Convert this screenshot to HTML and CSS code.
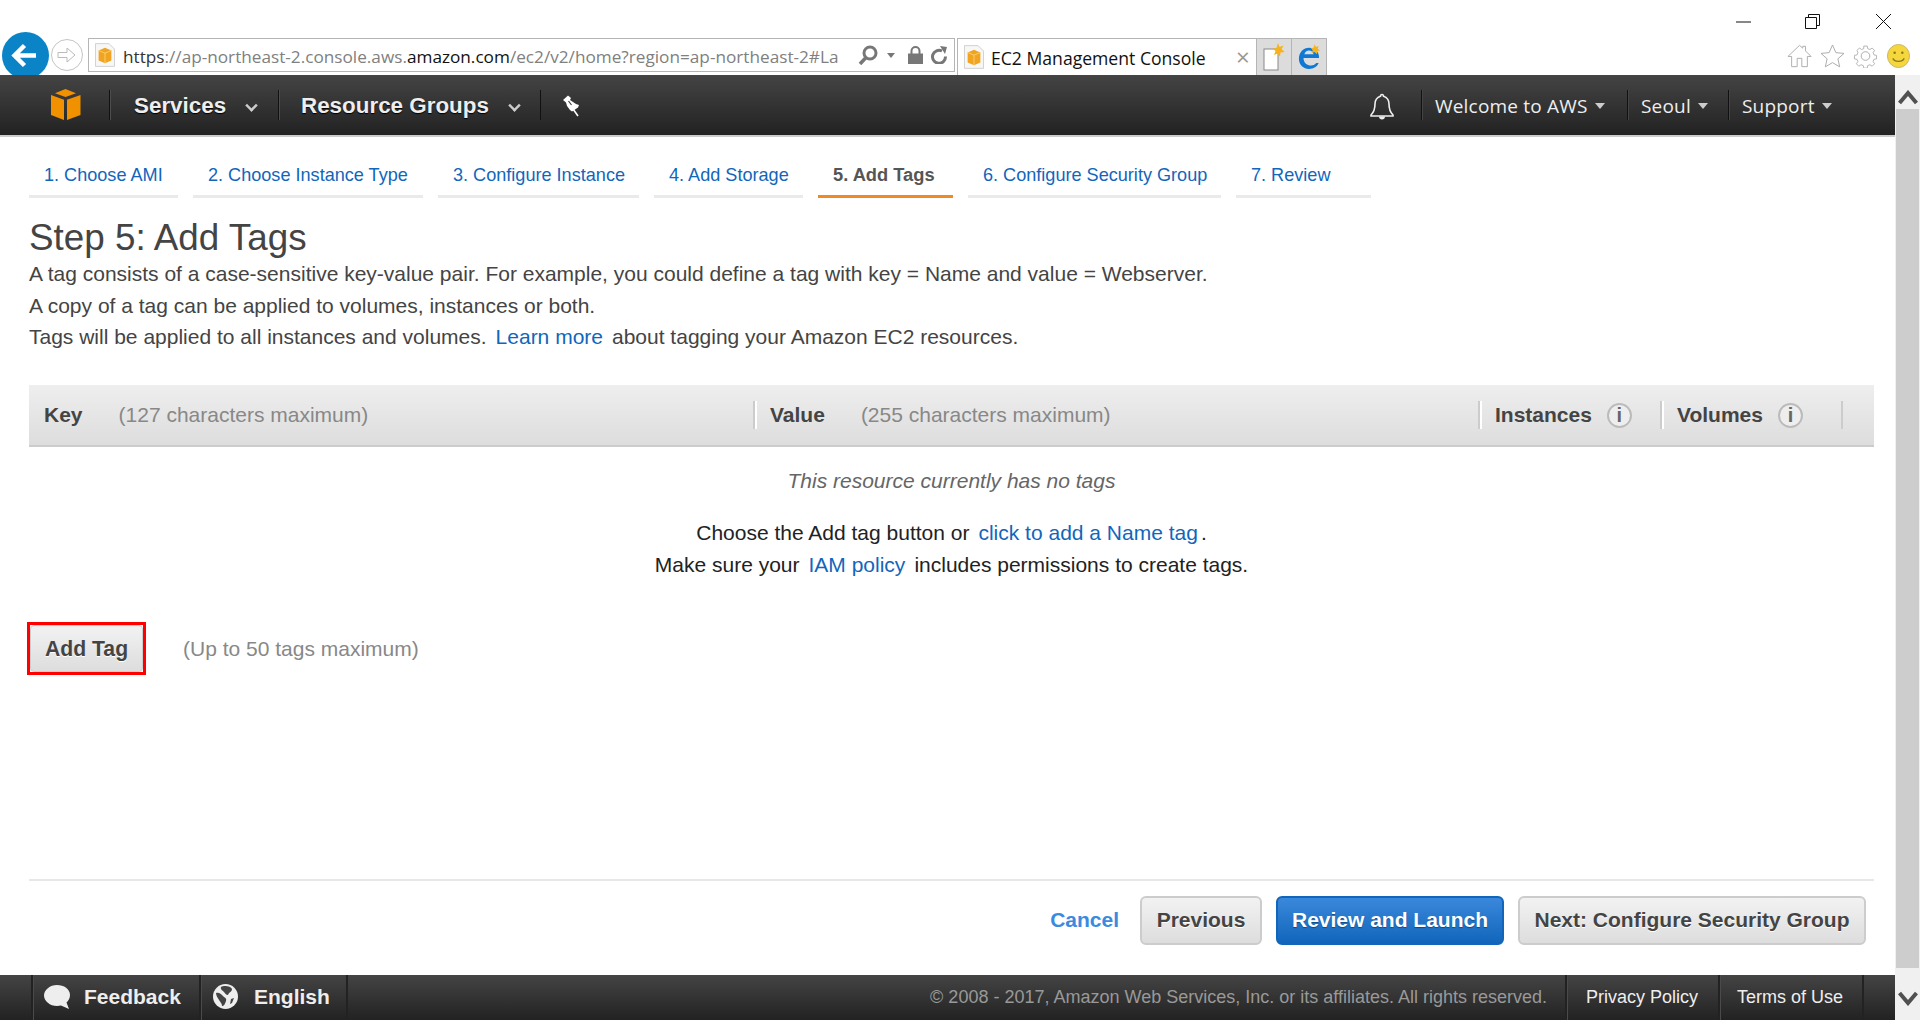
FILE: index.html
```html
<!DOCTYPE html>
<html lang="en">
<head>
<meta charset="utf-8">
<title>EC2 Management Console</title>
<link rel="stylesheet" href="styles.css">
</head>
<body>
<header class="chrome">
  <svg class="back" viewBox="0 0 47 47"><circle cx="23.5" cy="23.5" r="23.5" fill="#0a84c6"/><path d="M34 23.5H13M22.5 13.5 12.5 23.5l10 10" fill="none" stroke="#fff" stroke-width="4.5"/></svg>
  <svg class="forward" viewBox="0 0 32 32"><circle cx="16" cy="16" r="15.5" fill="#fff" stroke="#c4c4c4"/><path d="M7 13.500h9V9l8 7-8 7v-4.500H7z" fill="#fff" stroke="#bbb"/></svg>
  <div class="address">
    <svg class="fav" viewBox="0 0 22 26"><path d="M.5.500h15l6 6v19H.5z" fill="#f7f7f7" stroke="#ccc"/><path d="M4 8l7-3 7 3v11l-7 3-7-3z" fill="#f0a420"/><path d="M4 8l7 3 7-3M11 11v11" fill="none" stroke="#fbd27a"/></svg>
    <span class="url"><span class="url-dark">https</span>://ap-northeast-2.console.aws.<span class="url-host">amazon.com</span>/ec2/v2/home?region=ap-northeast-2#La</span>
    <svg class="addr-search" viewBox="0 0 20 20"><circle cx="12" cy="8" r="6" fill="none" stroke="#777" stroke-width="3"/><path d="M8 12.500 2 19" stroke="#777" stroke-width="3.500"/></svg>
    <span class="addr-caret"></span>
    <svg class="addr-lock" viewBox="0 0 15 18"><path d="M3.500 8V5a4 4 0 0 1 8 0v3" fill="none" stroke="#777" stroke-width="2"/><rect y="7.500" width="15" height="10.500" fill="#777"/></svg>
    <svg class="addr-refresh" viewBox="0 0 18 18"><path d="M12 5a6.500 6.500 0 1 0 3.500 5.500" fill="none" stroke="#777" stroke-width="3"/><path d="M10 0l7 1-2 7z" fill="#777"/></svg>
  </div>
  <div class="tab">
    <svg class="fav" viewBox="0 0 22 26"><path d="M.5.500h15l6 6v19H.5z" fill="#f7f7f7" stroke="#ccc"/><path d="M4 8l7-3 7 3v11l-7 3-7-3z" fill="#f0a420"/><path d="M4 8l7 3 7-3M11 11v11" fill="none" stroke="#fbd27a"/></svg>
    <span class="tab-title">EC2 Management Console</span>
    <span class="tab-close">×</span>
  </div>
  <div class="tab-btn">
    <svg viewBox="0 0 22 28"><rect x="1" y="6" width="14" height="21" fill="#fff" stroke="#888"/><path d="M15 0l1.500 4 4-1.500-2 3.500 3 3-4 .5-.5 4-2.500-3-3.500 1.500 1.500-4-3-2.500 4-.5z" fill="#f5b21e"/></svg>
  </div>
  <div class="tab-btn">
    <svg viewBox="0 0 24 28"><path d="M20 20.500a8 8 0 0 1-14-5.500h17C23 8 18 4 12 4 6 4 1 9 1 16s5 11 11 11c5 0 9-2.500 10.500-6.500zM7 11c.5-2.500 2.500-4 5-4s4.500 1.500 5 4z" fill="#0f78d4"/><path d="M18 0l1.500 3 3-1-1 3 2.500 2-3 .5-.5 3.500-2.500-2.500-3 1 1-3-2-2 3-.5z" fill="#f5b21e"/></svg>
  </div>
  <div class="chrome-right">
    <div class="winbtns">
      <svg class="win-min" viewBox="0 0 15 15"><path d="M0 8h15" stroke="#111"/></svg>
      <svg class="win-restore" viewBox="0 0 15 15"><path d="M3.500 3V.5h11v11H12M.5 3.500h11v11H.5z" fill="none" stroke="#111"/></svg>
      <svg class="win-close" viewBox="0 0 15 15"><path d="M0 0l15 15M15 0 0 15" stroke="#111"/></svg>
    </div>
    <div class="toolicons">
      <svg viewBox="0 0 27 25"><path d="M13.500 1 1 13h4v11h6v-9h5v9h6V13h4l-6-6V2h-3v2z" fill="#fff" stroke="#aaa"/></svg>
      <svg viewBox="0 0 25 25"><path d="M12.500 1l3.500 8 8.500.8-6.400 5.600 1.900 8.400-7.500-4.400L5 23.800l1.900-8.400L.5 9.800 9 9z" fill="#fff" stroke="#aaa"/></svg>
      <svg viewBox="0 0 25 25"><circle cx="12.500" cy="12.500" r="4.500" fill="none" stroke="#aaa"/><path d="M10.500 1h4l.6 3 2.500 1 2.600-1.700 2.800 2.800-1.700 2.600 1 2.500 3 .6v4l-3 .6-1 2.500 1.700 2.600-2.800 2.800-2.600-1.700-2.500 1-.6 3h-4l-.6-3-2.500-1-2.600 1.700-2.800-2.800 1.700-2.600-1-2.500-3-.6v-4l3-.6 1-2.500L2.700 6l2.800-2.800L8 5l2.500-1z" fill="none" stroke="#aaa" transform="translate(1.250 1.250) scale(.9)"/></svg>
      <svg viewBox="0 0 24 25"><ellipse cx="12" cy="12.500" rx="11.500" ry="12" fill="#f5d63d" stroke="#c9b66a"/><circle cx="8" cy="9" r="1.300" fill="#8a7a20"/><circle cx="16" cy="9" r="1.300" fill="#8a7a20"/><path d="M6 15c2 4 10 4 12 0" fill="none" stroke="#8a7a20" stroke-width="1.300"/></svg>
    </div>
  </div>
</header>
<div class="app">
  <div class="page">
    <nav class="nav">
      <div class="nav-logo">
        <svg viewBox="0 0 31 31"><path d="M15.500 0 26 4.200 15.500 8 5 4.200z" fill="#f29100"/><path d="M1 6l13 4.800V31L1 26z" fill="#f29100"/><path d="M30.500 6 17 10.800V31l13.500-5z" fill="#f29100"/></svg>
      </div>
      <div class="nav-item nav-services">Services<span class="nav-caret"></span></div>
      <div class="nav-item nav-groups">Resource Groups<span class="nav-caret"></span></div>
      <div class="nav-pin">
        <svg viewBox="0 0 18 22"><path d="M1 5 6 .5 9 3 8 5l6 4 3 1-1 2.500-6 4-2-1.500-3-4-1-3.500z" fill="#fff"/><path d="M11 14l5 7" stroke="#fff" stroke-width="1.600"/><path d="M6.500 6l3 4" stroke="#444" stroke-width="1.200"/></svg>
      </div>
      <div class="nav-right">
        <div class="nav-bell">
          <svg viewBox="0 0 24 27"><path d="M12 1.500c-1 0-1.500.7-1.500 1.800C7 4.500 5 7.500 5 11c0 5-1 8-4 11v1h22v-1c-3-3-4-6-4-11 0-3.500-2-6.500-5.500-7.700 0-1.100-.5-1.800-1.500-1.800z" fill="none" stroke="#eee" stroke-width="1.600"/><path d="M9 23.500h6c0 2-1.300 3-3 3s-3-1-3-3z" fill="#eee"/></svg>
        </div>
        <div class="nav-sm nav-welcome">Welcome to AWS<span class="sm-caret"></span></div>
        <div class="nav-sm nav-seoul">Seoul<span class="sm-caret"></span></div>
        <div class="nav-sm nav-support">Support<span class="sm-caret"></span></div>
      </div>
    </nav>
    <main class="main">
      <ul class="steps">
        <li class="step">1. Choose AMI</li>
        <li class="step">2. Choose Instance Type</li>
        <li class="step">3. Configure Instance</li>
        <li class="step">4. Add Storage</li>
        <li class="step step-active">5. Add Tags</li>
        <li class="step">6. Configure Security Group</li>
        <li class="step">7. Review</li>
      </ul>
      <h1 class="title">Step 5: Add Tags</h1>
      <div class="intro">
        <p>A tag consists of a case-sensitive key-value pair. For example, you could define a tag with key = Name and value = Webserver.</p>
        <p>A copy of a tag can be applied to volumes, instances or both.</p>
        <p>Tags will be applied to all instances and volumes.<a class="link link-gap">Learn more</a>about tagging your Amazon EC2 resources.</p>
      </div>
      <div class="thead">
        <div class="th th-first"><b>Key</b><span class="hint">(127 characters maximum)</span></div>
        <div class="th"><b>Value</b><span class="hint">(255 characters maximum)</span></div>
        <div class="th"><b>Instances</b><span class="info">i</span></div>
        <div class="th"><b>Volumes</b><span class="info">i</span></div>
        <div class="th th-last"></div>
      </div>
      <p class="empty">This resource currently has no tags</p>
      <div class="help">
        <p>Choose the Add tag button or<a class="link link-gap">click to add a Name tag</a><span class="dot">.</span></p>
        <p>Make sure your<a class="link link-gap">IAM policy</a>includes permissions to create tags.</p>
      </div>
      <div class="addrow">
        <div class="highlight"><button class="btn btn-add">Add Tag</button></div>
        <span class="addnote">(Up to 50 tags maximum)</span>
      </div>
      <div class="actions">
        <a class="cancel">Cancel</a>
        <button class="btn btn-prev">Previous</button>
        <button class="btn btn-primary">Review and Launch</button>
        <button class="btn btn-next">Next: Configure Security Group</button>
      </div>
    </main>
    <footer class="foot">
      <div class="foot-item foot-feedback">
        <svg viewBox="0 0 26 24"><path d="M13 0c7 0 13 4 13 10 0 3-1.500 6-3.500 7.500L25 24l-8-3.500c-1.200.3-2.500.5-4 .5C6 21 0 16 0 10.500S6 0 13 0z" fill="#eee"/></svg>
        <span>Feedback</span>
      </div>
      <div class="foot-item foot-lang">
        <svg viewBox="0 0 25 25"><circle cx="12.500" cy="12.500" r="12.500" fill="#eee"/><path d="M8 3c3-2 10-1 11 2 0 3-3 3-4 6-2 0-3-2-4-3S7 5 8 3zM3 9c3-1 5 1 7 3s4 2 3 5-2 5-4 5c0-3-2-4-3-6S3 12 3 9zM18 15l3-1-2 5-2 1z" fill="#444"/></svg>
        <span>English</span>
      </div>
      <div class="foot-right">
        <span class="copyright">© 2008 - 2017, Amazon Web Services, Inc. or its affiliates. All rights reserved.</span>
        <a class="foot-link foot-privacy">Privacy Policy</a>
        <a class="foot-link foot-terms">Terms of Use</a>
      </div>
    </footer>
  </div>
  <aside class="scrollbar">
    <svg class="sb-arrow sb-up" viewBox="0 0 20 15"><path d="M1.500 13 10 3l8.500 10" fill="none" stroke="#505050" stroke-width="4"/></svg>
    <div class="sb-thumb"></div>
    <svg class="sb-arrow sb-down" viewBox="0 0 20 15"><path d="M1.500 2 10 12l8.500-10" fill="none" stroke="#505050" stroke-width="4"/></svg>
  </aside>
</div>
</body>
</html>
```
FILE: styles.css
```css
* { box-sizing: border-box; }
html, body { margin: 0; height: 1020px; overflow: hidden; background: #fff; }
body { font-family: "Liberation Sans", Arial, sans-serif; display: flex; flex-direction: column; color: #444; }
p { margin: 0; }

/* browser chrome */
.chrome { height: 75px; flex: none; display: flex; align-items: flex-start; padding-top: 32px; padding-left: 2px; overflow: hidden; position: relative; font-family: "Open Sans", sans-serif; }
.back { width: 47px; height: 47px; flex: none; }
.forward { width: 32px; height: 32px; margin: 7px 0 0 2px; flex: none; }
.address { width: 867px; height: 34px; margin: 6px 0 0 5px; border: 1px solid #b5b5b5; display: flex; align-items: center; padding-left: 6px; flex: none; }
.fav { width: 20px; height: 24px; flex: none; }
.url { width: 728px; margin-left: 8px; padding-top: 2px; overflow: hidden; white-space: nowrap; font-size: 17.200px; color: #808080; flex: none; }
.url-dark { color: #333; }
.url-host { color: #111; }
.addr-search { width: 20px; height: 20px; margin-left: 7px; flex: none; }
.addr-caret { width: 0; height: 0; border: 4px solid transparent; border-top: 5px solid #777; border-bottom: 0; margin-left: 9px; flex: none; }
.addr-lock { width: 15px; height: 18px; margin-left: 13px; flex: none; }
.addr-refresh { width: 18px; height: 18px; margin-left: 7px; flex: none; }
.tab { width: 300px; height: 37px; margin: 6px 0 0 2px; border: 1px solid #b5b5b5; border-bottom: 0; display: flex; align-items: center; padding-left: 6px; flex: none; }
.tab-title { margin-left: 7px; padding-top: 2px; font-size: 17.600px; color: #111; white-space: nowrap; width: 234px; flex: none; }
.tab-close { color: #999; font-size: 24px; line-height: 1; margin-left: 11px; }
.tab-btn { width: 35px; height: 37px; margin-top: 6px; background: #dcdcdc; border: 1px solid #b5b5b5; border-left: 0; border-bottom: 0; display: flex; align-items: center; justify-content: center; flex: none; }
.tab-btn svg { width: 22px; height: 28px; }
.chrome-right { position: absolute; top: 0; right: 0; width: 200px; }
.winbtns { display: flex; height: 44px; padding-top: 14px; }
.win-min, .win-restore, .win-close { width: 15px; height: 15px; }
.win-min { margin-left: 16px; }
.win-restore { margin-left: 54px; }
.win-close { margin-left: 56px; }
.toolicons { display: flex; align-items: center; padding-left: 67px; gap: 8px; }
.toolicons svg { width: 25px; height: 24px; flex: none; }

/* app */
.app { flex: 1; min-height: 0; display: grid; grid-template-columns: 1fr 25px; }
.page { display: flex; flex-direction: column; min-width: 0; }

.nav { height: 62px; flex: none; display: flex; background: linear-gradient(#444, #222) 0 0 / 100% 60px no-repeat; border-bottom: 2px solid #ccc; }
.nav-logo { width: 109px; padding: 14px 0 0 50px; flex: none; }
.nav-logo svg { width: 31px; height: 31px; display: block; }
.nav-item { margin: 15px 0; height: 30px; padding-top: 2px; border-left: 1px solid #111; box-shadow: inset 1px 0 #4d4d4d; display: flex; align-items: center; color: #eee; font-weight: bold; font-size: 22.400px; text-shadow: 0 1px 1px #000; flex: none; }
.nav-services { width: 169px; padding-left: 24px; }
.nav-groups { width: 262px; padding-left: 22px; }
.nav-caret { width: 11px; height: 11px; border-right: 3px solid #ccc; border-bottom: 3px solid #ccc; transform: rotate(45deg) scale(.8); margin: -2px 0 0 20px; }
.nav-pin { margin: 15px 0; height: 30px; border-left: 1px solid #111; padding: 5px 0 0 21px; flex: none; }
.nav-pin svg { width: 18px; height: 22px; display: block; }
.nav-right { margin-left: auto; display: flex; }
.nav-bell { width: 100px; padding: 18px 0 0 49px; flex: none; }
.nav-bell svg { width: 24px; height: 27px; display: block; }
.nav-sm { margin: 15px 0; height: 30px; padding-top: 2px; border-left: 1px solid #111; box-shadow: inset 1px 0 #444; display: flex; align-items: center; padding-left: 13px; color: #eee; font-family: "Open Sans", sans-serif; font-size: 19px; letter-spacing: .2px; flex: none; }
.nav-welcome { width: 206px; }
.nav-seoul { width: 101px; }
.nav-support { width: 167px; }
.sm-caret { width: 0; height: 0; border: 5.500px solid transparent; border-top: 6px solid #ccc; border-bottom: 0; margin-left: 7px; }

.main { flex: 1; min-height: 0; display: flex; flex-direction: column; padding: 0 21px 0 29px; }
.steps { list-style: none; margin: 0; padding: 0; display: grid; grid-template-columns: 149px 230px 201px 149px 135px 253px 135px; gap: 15px; height: 61px; flex: none; }
.step { height: 61px; padding: 27px 0 0 15px; font-size: 18.100px; line-height: 22px; color: #1166bb; border-bottom: 3px solid #eaeaea; white-space: nowrap; }
.step-active { color: #555; font-weight: bold; font-size: 18.300px; border-bottom-color: #f08a24; }
.title { margin: 20px 0 0; font-size: 36.800px; line-height: 40px; font-weight: normal; color: #444; }
.intro { font-size: 21px; line-height: 31.500px; color: #444; }
.link { color: #1166bb; }
.link-gap { margin: 0 9px; }
.thead { margin-top: 32.500px; height: 62px; flex: none; display: grid; grid-template-columns: 724px 725px 182px 181px 1fr; align-items: center; background: linear-gradient(#eee, #ddd); border-bottom: 2px solid #ccc; font-size: 21px; }
.th { height: 28px; border-left: 2px solid #ccc; box-shadow: inset 2px 0 #fff; padding-left: 15px; display: flex; align-items: center; }
.th-first { border-left: 0; box-shadow: none; padding-left: 15px; }
.th-last { box-shadow: none; }
.hint { margin-left: 36px; color: #888; }
.info { width: 25px; height: 25px; margin-left: 15px; border-radius: 50%; border: 2px solid #bbb; background: #eee; display: flex; align-items: center; justify-content: center; font: bold 20px "Liberation Sans", sans-serif; color: #666; }
.empty { margin-top: 18px; text-align: center; font-style: italic; font-size: 21px; line-height: 32px; color: #666; }
.help { margin-top: 20px; text-align: center; font-size: 21px; line-height: 32px; color: #222; }
.dot { margin-left: -6px; }
.addrow { margin-top: 41px; display: flex; align-items: center; }
.highlight { width: 119px; height: 53px; margin-left: -2px; border: 3px solid #f00; flex: none; }
.btn { font-family: "Liberation Sans", sans-serif; font-weight: bold; font-size: 21px; height: 49px; border-radius: 6px; border: 2px solid #ccc; background: linear-gradient(#f2f2f2, #ddd); color: #444; text-shadow: 0 1px 0 #fff; padding: 0 0 2px; white-space: nowrap; }
.btn-add { display: block; width: 113px; height: 47px; border-width: 1px; border-radius: 4px; padding: 0; font-size: 21.200px; }
.addnote { margin-left: 37px; font-size: 21px; color: #888; }
.actions { margin-top: auto; margin-bottom: 30px; border-top: 2px solid #e8e8e8; padding-top: 15px; display: flex; justify-content: flex-end; align-items: center; gap: 14px; padding-right: 8px; }
.cancel { color: #3b8ade; font-weight: bold; font-size: 21px; margin-right: 7px; margin-bottom: 2px; }
.btn-prev { width: 122px; }
.btn-primary { width: 228px; background: linear-gradient(#3a88dc, #1166bb); border-color: #1166bb; color: #fff; text-shadow: 0 1px 1px #0b4a8a; }
.btn-next { width: 348px; }

.foot { height: 45px; flex: none; display: flex; align-items: stretch; background: linear-gradient(#444, #222); color: #eee; font-weight: bold; font-size: 21px; padding-left: 31px; }
.foot-item { display: flex; align-items: center; border-left: 2px solid #222; box-shadow: inset 1px 0 #4a4a4a; padding-bottom: 2px; flex: none; }
.foot-feedback { width: 168px; padding-left: 11px; gap: 14px; }
.foot-feedback svg { width: 26px; height: 24px; }
.foot-lang { width: 147px; padding-left: 12px; gap: 16px; }
.foot-lang svg { width: 25px; height: 25px; }
.foot-right { flex: 1; display: flex; align-items: center; justify-content: flex-end; border-left: 2px solid #222; font-weight: normal; font-size: 18px; padding-right: 31px; }
.copyright { color: #999; margin-right: 18px; }
.foot-link { height: 100%; display: flex; align-items: center; border-left: 2px solid #222; box-shadow: inset 1px 0 #4a4a4a; color: #eee; flex: none; }
.foot-privacy { width: 153px; padding-left: 19px; }
.foot-terms { width: 146px; padding-left: 17px; border-right: 2px solid #222; }

.scrollbar { background: #f0f0f0; display: flex; flex-direction: column; align-items: center; padding: 15px 0 12px; }
.sb-arrow { width: 20px; height: 15px; flex: none; }
.sb-thumb { width: 23px; height: 859px; margin: 4px 0 23px; background: #cdcdcd; flex: none; }
```
